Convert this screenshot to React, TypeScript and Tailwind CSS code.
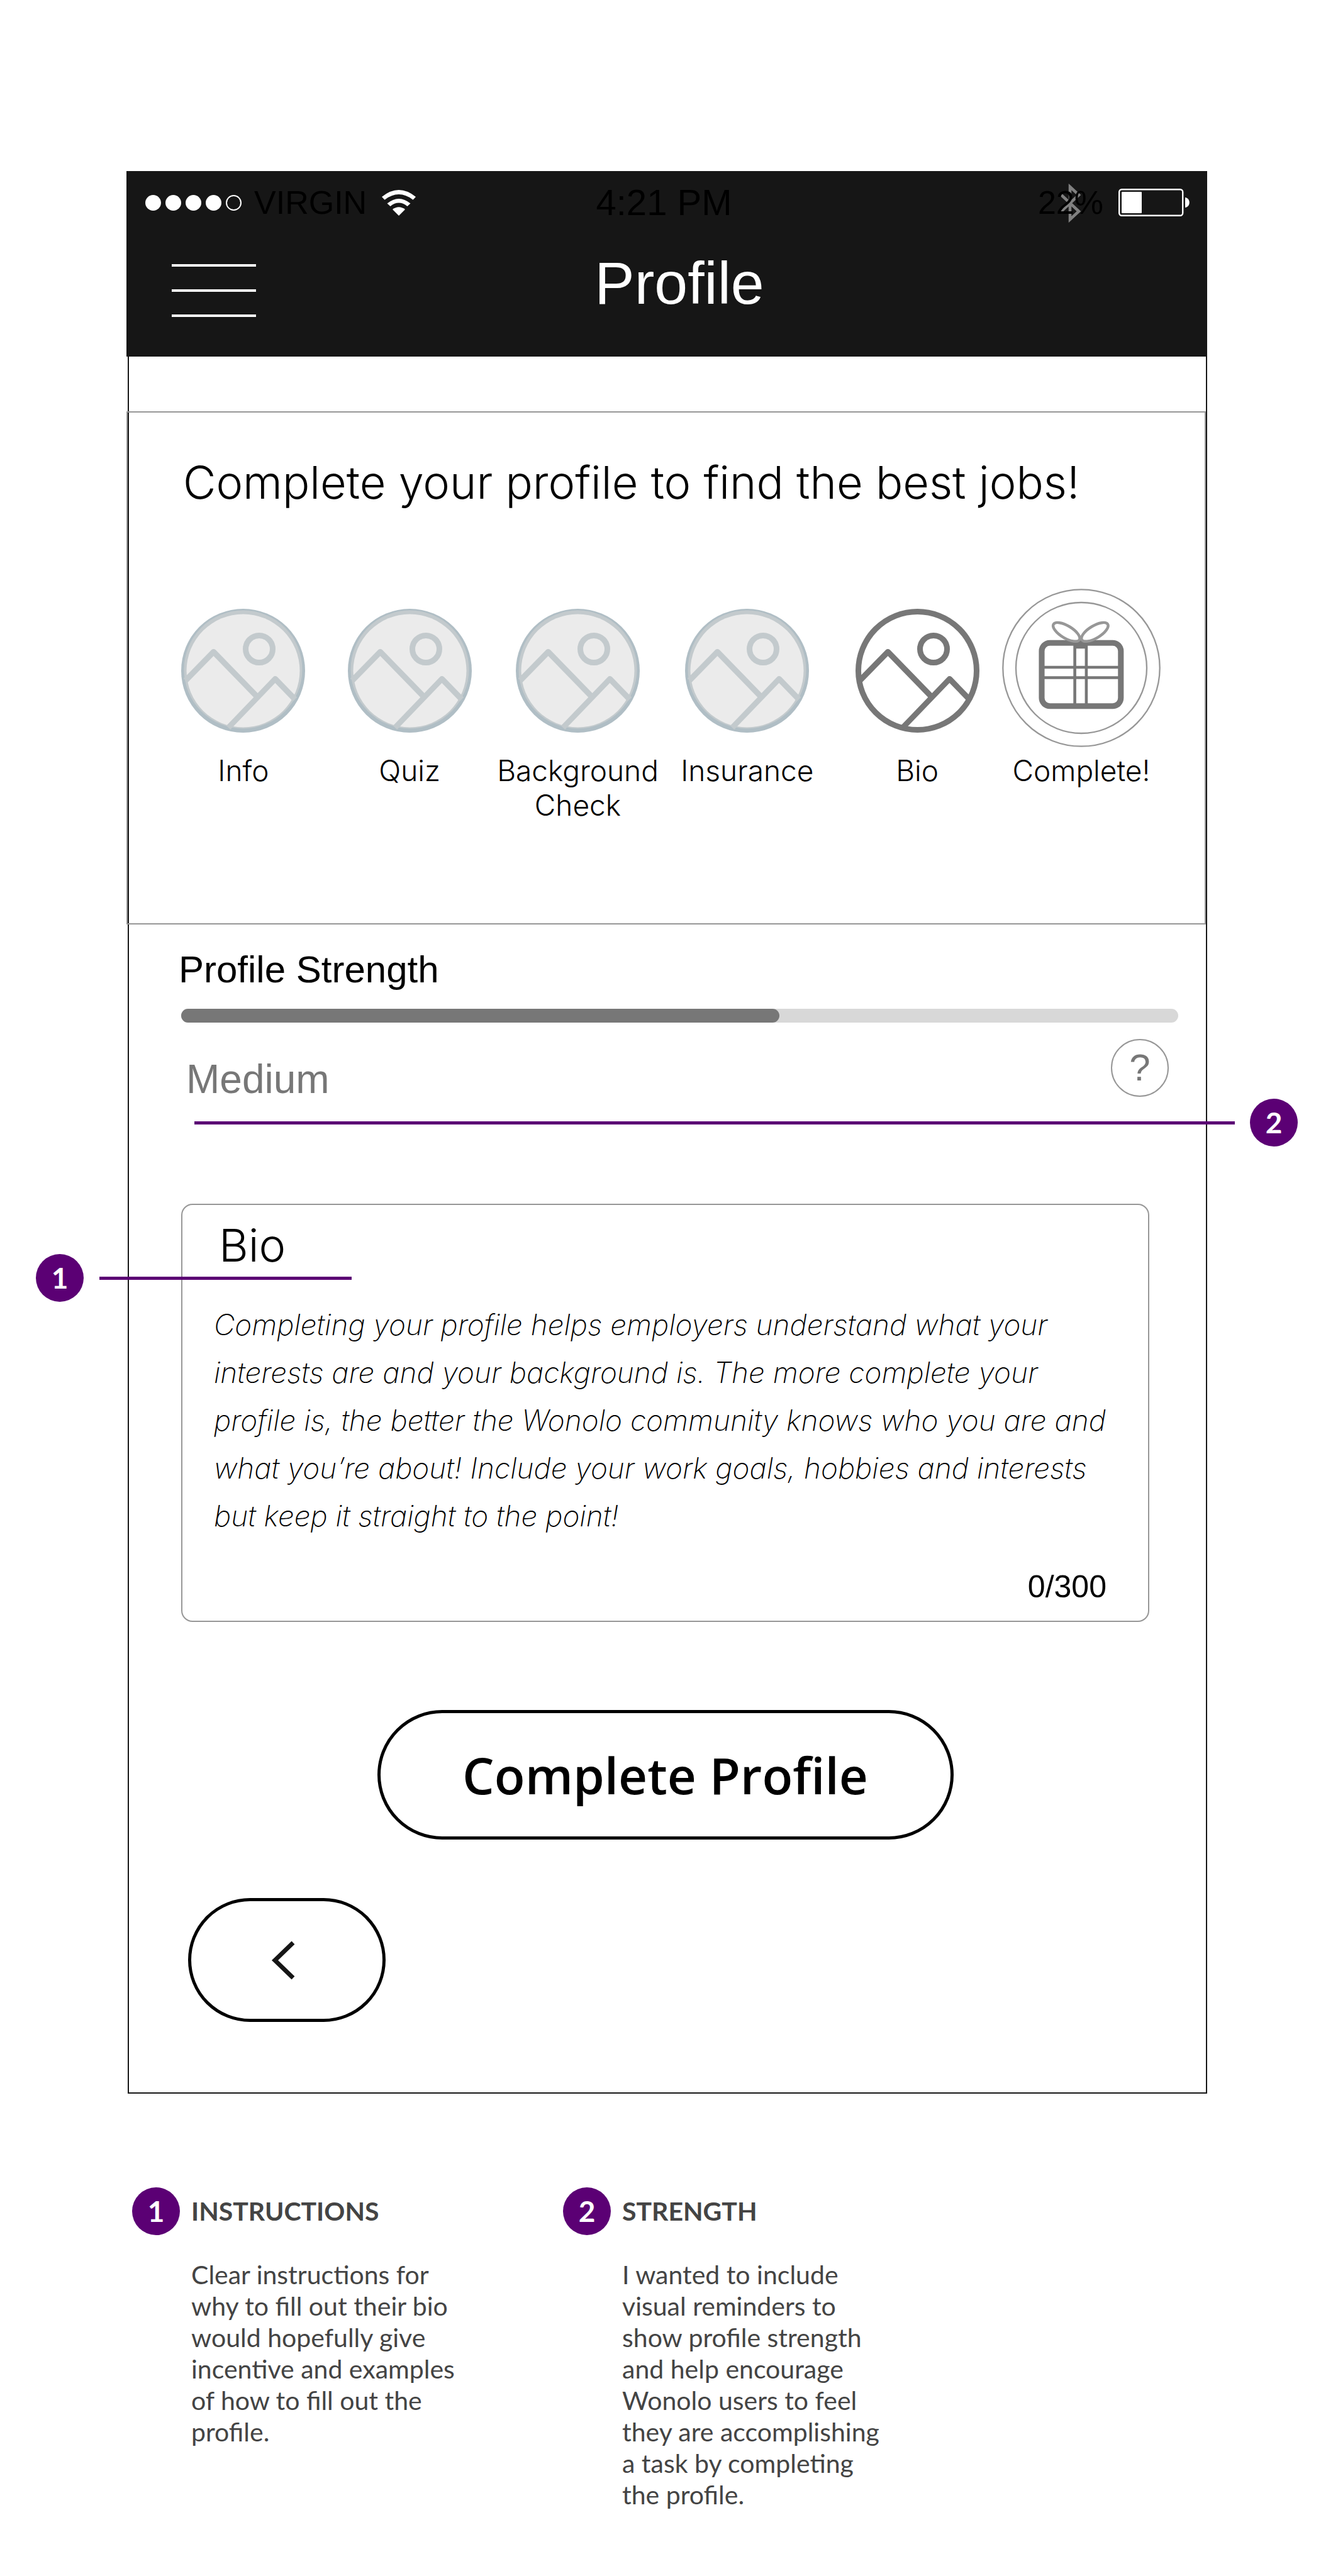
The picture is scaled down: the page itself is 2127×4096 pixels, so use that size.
import { useState } from 'react';

interface Step {
  label: string;
  state: 'done' | 'current' | 'reward';
}

interface Note {
  number: number;
  title: string;
  text: string;
}

const MAX_BIO = 300;

const steps: Step[] = [
  { label: 'Info', state: 'done' },
  { label: 'Quiz', state: 'done' },
  { label: 'Background Check', state: 'done' },
  { label: 'Insurance', state: 'done' },
  { label: 'Bio', state: 'current' },
  { label: 'Complete!', state: 'reward' },
];

const notes: Note[] = [
  {
    number: 1,
    title: 'INSTRUCTIONS',
    text: 'Clear instructions for why to fill out their bio would hopefully give incentive and examples of how to fill out the profile.',
  },
  {
    number: 2,
    title: 'STRENGTH',
    text: 'I wanted to include visual reminders to show profile strength and help encourage Wonolo users to feel they are accomplishing a task by completing the profile.',
  },
];

const bioHint =
  'Completing your profile helps employers understand what your interests are and your background is. The more complete your profile is, the better the Wonolo community knows who you are and what you’re about! Include your work goals, hobbies and interests but keep it straight to the point!';

function PictureIcon({ done }: { done: boolean }) {
  const line = done ? '#c3cacd' : '#777777';
  return (
    <svg viewBox="0 0 197 199" className="mt-2 h-[199px] w-[197px]" aria-hidden="true">
      {done ? (
        <>
          <circle cx="98.5" cy="99.5" r="98.5" fill="#b0bec5" />
          <circle cx="98.5" cy="97.5" r="94" fill="#c3cacd" />
          <circle cx="98.5" cy="99.5" r="90" fill="#ebebeb" />
        </>
      ) : (
        <circle cx="98.5" cy="99.5" r="94" fill="none" stroke={line} strokeWidth="9" />
      )}
      <g fill="none" stroke={line} strokeWidth="9" strokeLinejoin="round">
        <circle cx="124" cy="65" r="21.5" />
        <path d="M7 115 L51.5 69.500 L120 140" />
        <path d="M75 190 L149.500 112.500 L181 145" />
      </g>
    </svg>
  );
}

function GiftIcon() {
  return (
    <svg viewBox="0 0 252 252" className="h-[252px] w-[252px]" fill="none" aria-hidden="true">
      <g stroke="#979797" strokeWidth="2.300">
        <circle cx="126" cy="126" r="124.700" />
        <circle cx="126" cy="126" r="104" />
      </g>
      <g stroke="#777777">
        <rect x="63" y="86.200" width="125.800" height="100.600" rx="13" strokeWidth="9.100" />
        <path d="M115.600 88V184 M133.900 88V184 M65 125H187 M65 141.500H187" strokeWidth="4.600" />
        <path d="M115.600 92.500H133.900" strokeWidth="5.600" />
      </g>
      <g stroke="#979797" strokeWidth="4.400">
        <ellipse cx="102.300" cy="68.900" rx="24" ry="9.800" transform="rotate(31 102.300 68.900)" />
        <ellipse cx="147.400" cy="68.900" rx="24" ry="9.800" transform="rotate(-31 147.400 68.900)" />
      </g>
    </svg>
  );
}

function WifiIcon() {
  return (
    <svg viewBox="0 0 54 41" className="h-[41px] w-[54px]" fill="#fff" aria-hidden="true">
      <path d="M0 11 Q27 -11 54 11 L49.500 15.700 Q27 -1.500 4.500 15.700 Z" />
      <path d="M8.500 21.500 Q27 6.300 45.500 21.500 L40.500 26 Q27 15.200 13.500 26 Z" />
      <path d="M17 31 Q27 23.500 37 31 L27 41 Z" />
    </svg>
  );
}

function BatteryIcon() {
  return (
    <svg viewBox="0 0 114 44" className="h-11 w-[114px]" aria-hidden="true">
      <rect x="1.200" y="1.200" width="101" height="41.600" rx="4" fill="none" stroke="#fff" strokeWidth="2.400" />
      <rect x="5" y="5" width="32" height="34" rx="1" fill="#fff" />
      <path d="M106 14 C115 15 115 29 106 30 Z" fill="#fff" />
    </svg>
  );
}

function Badge({ number }: { number: number }) {
  return (
    <span className="flex h-[76px] w-[76px] shrink-0 items-center justify-center rounded-full bg-[#5b0074] font-[Lato,sans-serif] text-[46px] font-bold leading-none text-white">
      {number}
    </span>
  );
}

function StatusBar() {
  return (
    <div className="grid grid-cols-[715fr_219fr_727fr] items-center pl-[30px] pr-[27px] text-[52px] leading-[60px] text-black">
      <div className="flex items-center">
        <div className="flex gap-[7px]">
          <span className="h-[25px] w-[25px] rounded-full bg-white" />
          <span className="h-[25px] w-[25px] rounded-full bg-white" />
          <span className="h-[25px] w-[25px] rounded-full bg-white" />
          <span className="h-[25px] w-[25px] rounded-full bg-white" />
          <span className="h-[25px] w-[25px] rounded-full border-2 border-white" />
        </div>
        <span className="ml-5 mr-6">VIRGIN</span>
        <WifiIcon />
      </div>
      <span className="whitespace-nowrap text-center text-[58px]">4:21 PM</span>
      <div className="flex items-center justify-end gap-6">
        <span className="relative">
          <svg
            viewBox="0 0 37 62"
            className="absolute left-8 top-0 h-[62px] w-[37px]"
            fill="none"
            stroke="#808080"
            strokeWidth="4.500"
            aria-hidden="true"
          >
            <path d="M3 16 L33 44 L19 57 V5 L33 18 L3 46" />
          </svg>
          <span className="relative">22%</span>
        </span>
        <BatteryIcon />
      </div>
    </div>
  );
}

function Header() {
  return (
    <header className="-ml-1 -mr-0.5 -mt-0.5 bg-[#161616] pb-[61px] pt-5">
      <StatusBar />
      <div className="mt-[42px] flex items-center pl-[72px] pr-[166px]">
        <button type="button" aria-label="Menu" className="mt-6 flex w-[134px] flex-col gap-9">
          <span className="h-1 w-full bg-white" />
          <span className="h-1 w-full bg-white" />
          <span className="h-1 w-full bg-white" />
        </button>
        <h1 className="flex-1 text-center text-[95px] leading-[112px] text-white">Profile</h1>
      </div>
    </header>
  );
}

function Steps() {
  return (
    <section className="-ml-1 mt-[87px] border-2 border-[#979797] pb-[160px] pt-[67px] font-[Inter,sans-serif] font-light">
      <h2 className="pl-[88px] text-[72px] leading-[88px]">Complete your profile to find the best jobs!</h2>
      <ol className="mt-[125px] grid grid-cols-[262fr_267fr_268fr_271fr_270fr_251fr] pl-[53px] pr-[70px]">
        {steps.map((step) => (
          <li key={step.label} className="flex flex-col items-center">
            <div className="flex h-[252px] items-center">
              {step.state === 'reward' ? <GiftIcon /> : <PictureIcon done={step.state === 'done'} />}
            </div>
            <span className="mt-[10px] text-center text-[46px] leading-[55px]">{step.label}</span>
          </li>
        ))}
      </ol>
    </section>
  );
}

function Strength() {
  return (
    <section className="relative pl-[79px] pr-11 pt-9">
      <h2 className="text-[60px] leading-[72px]">Profile Strength</h2>
      <div
        role="progressbar"
        aria-label="Profile Strength"
        aria-valuenow={60}
        className="ml-1 mt-[26px] h-[22px] rounded-full bg-[#d8d8d8]"
      >
        <div className="h-full w-3/5 rounded-full bg-[#777777]" />
      </div>
      <div className="mt-[26px] flex items-start justify-between pl-3 pr-[15px] text-[#777777]">
        <p className="mt-7 text-[64px] leading-[72px]">Medium</p>
        <button
          type="button"
          aria-label="About profile strength"
          className="h-[92px] w-[92px] rounded-full border-2 border-[#979797] text-[60px] leading-none"
        >
          ?
        </button>
      </div>
      <div className="absolute -right-[146px] left-[104px] top-[277px] flex items-center gap-6">
        <span className="h-[5px] flex-1 bg-[#5b0074]" />
        <Badge number={2} />
      </div>
    </section>
  );
}

function BioForm() {
  const [bio, setBio] = useState('');

  return (
    <form className="relative pb-28 pl-[83px] pr-[90px] pt-[162px]" onSubmit={(e) => e.preventDefault()}>
      <div className="flex flex-col rounded-[18px] border-2 border-[#979797] pb-6 pl-[50px] pr-[38px] pt-5">
        <label htmlFor="bio" className="pl-2 font-[Inter,sans-serif] text-[72px] font-light leading-[88px]">
          Bio
        </label>
        <textarea
          id="bio"
          rows={5}
          maxLength={MAX_BIO}
          value={bio}
          onChange={(e) => setBio(e.target.value)}
          placeholder={bioHint}
          className="mt-11 block w-full resize-none overflow-hidden font-[Inter,sans-serif] text-[46px] font-extralight italic leading-[76px] text-black placeholder:text-black focus:outline-none"
        />
        <p className="mt-[45px] pr-[28px] text-right text-[50px] leading-[60px]">
          {bio.length}/{MAX_BIO}
        </p>
      </div>
      <button
        type="submit"
        className="mx-auto mt-[140px] block h-[206px] w-[916px] rounded-full border-5 border-black font-['Open_Sans',sans-serif] text-[80px] font-semibold leading-none"
      >
        Complete Profile
      </button>
      <button
        type="button"
        aria-label="Back"
        className="ml-[11px] mt-[93px] flex h-[197px] w-[314px] items-center justify-center rounded-full border-5 border-black pr-3"
      >
        <svg viewBox="0 0 38 62" className="h-[62px] w-[38px]" fill="none" stroke="#161616" strokeWidth="7" aria-hidden="true">
          <path d="M35 3 L6 31 L35 59" />
        </svg>
      </button>
      <div className="absolute -left-[148px] top-[242px] flex items-center gap-[25px]">
        <Badge number={1} />
        <span className="h-[5px] w-[401px] bg-[#5b0074]" />
      </div>
    </form>
  );
}

export default function App() {
  return (
    <div className="bg-white pb-[102px] pt-[272px] font-['Liberation_Sans',Arial,sans-serif] text-black">
      <main className="ml-[203px] mr-[208px] border-2 border-[#161616]">
        <Header />
        <Steps />
        <Strength />
        <BioForm />
      </main>
      <footer className="ml-[210px] mt-[149px] flex gap-[171px] font-[Lato,sans-serif] text-[#444444]">
        {notes.map((note) => (
          <article key={note.number} className="w-[514px]">
            <div className="flex items-center gap-[18px]">
              <Badge number={note.number} />
              <h3 className="text-[41px] font-bold leading-[50px]">{note.title}</h3>
            </div>
            <p className="mt-[38px] pl-[94px] text-[41px] leading-[50px]">{note.text}</p>
          </article>
        ))}
      </footer>
    </div>
  );
}
